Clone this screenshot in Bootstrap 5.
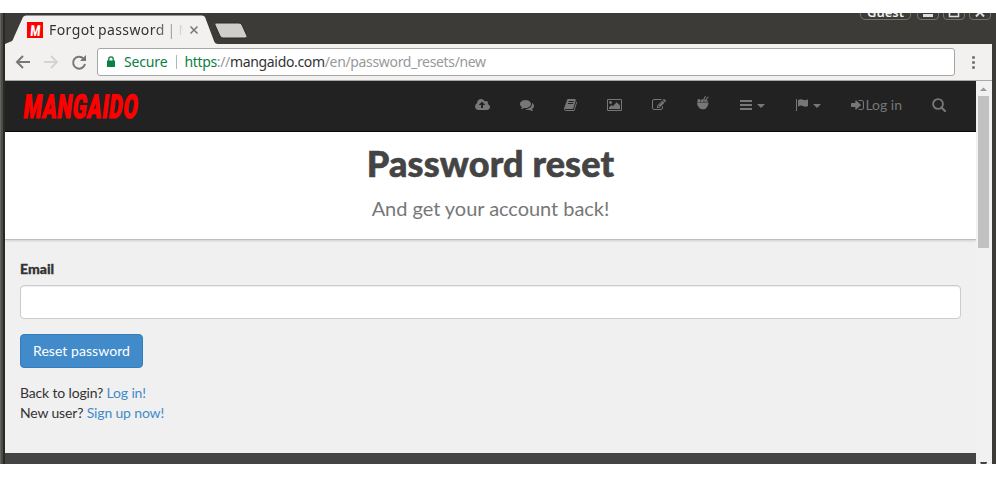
<!DOCTYPE html>
<html lang="en">
<head>
<meta charset="utf-8">
<title>Forgot password | Mangaido</title>
<link href="https://cdn.jsdelivr.net/npm/bootstrap@5.3.0/dist/css/bootstrap.min.css" rel="stylesheet">
<style>
body{background:#fff;padding-top:13px;height:477px;overflow:hidden;font:14px/20px Lato,sans-serif;color:#333}
.window{height:451px;background:#3c3b37;padding:0 4px 0 5px;border-left:0;box-shadow:inset 1px 0 #65645e,inset 3px 0 #4d4b46,inset 5px 0 #2b2925}
.ui{font-family:"Noto Sans","Open Sans",sans-serif}
.strip{height:31px;flex:none}
.strip svg.tabs{display:block}
.controls{position:absolute;right:1px;top:-11px;height:19px;overflow:hidden;gap:4px}
.pill{height:18px;width:22px;border:1px solid #77756e;border-radius:4px;color:#eee;font-size:13px;font-weight:600;line-height:18px;text-align:center}
.pill.guest{width:51px;border-radius:5px;margin-right:2px}
.clipper{position:absolute;right:0;top:0;width:150px;height:9px;overflow:hidden}
.tabtitle{position:absolute;left:44px;top:7px;width:134px;font-size:14px;letter-spacing:.42px;word-spacing:-1.2px;overflow:hidden;white-space:nowrap;-webkit-mask-image:linear-gradient(90deg,#000 105px,transparent 136px)}
.tools{height:37px;background:#f2f1f0;border-bottom:1px solid #a8a8a6;padding:0 11px 1px 10px;flex:none}
.address{height:28px;border:1px solid #a6a6a4;border-radius:3px;background:#fff;font-size:14px;padding-left:9px;white-space:nowrap}
.address .rule{width:1px;height:14px;background:#b5b5b5;margin:0 7px 0 9px}
.secure{margin-left:9px;letter-spacing:-.15px}
.url{letter-spacing:-.34px}
.green{color:#0b8043}.grey{color:#999}
.view{height:383px;flex:none}
.site{width:971px;background:#f0f0f0;overflow:hidden}
.sitebar{height:51px;background:#222;border-bottom:1px solid #080808;padding:0 30px 0 18px;color:#777;flex:none}
.sitebar .menu{gap:30px;padding-bottom:2px}
.sitebar svg{fill:#777;display:block}
.caret{border:4px solid transparent;border-top-color:#777;border-bottom:0;margin-left:5px;margin-top:2px}
.flags{margin-left:1px}
.signin{margin-left:1px}
.hero{height:108px;background:#fff;border-bottom:1px solid #bdbdbd;box-shadow:0 1px 2px #0002;text-align:center;padding-top:11px;flex:none}
.hero h1{font-size:36px;font-weight:900;line-height:40px;color:#444;margin:0 0 10px;letter-spacing:.15px;-webkit-text-stroke:.6px #444}
.hero p{font-size:20px;line-height:30px;color:#777;margin:0;letter-spacing:-.04px}
.main{padding:19px 15px 0;height:213px;flex:none}
.main label{font-weight:900;line-height:20px;margin-bottom:6px;letter-spacing:0;-webkit-text-stroke:.3px #333}
.main .form-control{height:34px;border-color:#ccc;border-radius:4px;box-shadow:inset 0 1px 1px rgba(0,0,0,.075);margin-bottom:15px}
.reset{height:34px;background:#428bca;border:1px solid #357ebd;color:#fff;font-size:14px;line-height:20px;padding:6px 12px;border-radius:4px;margin-bottom:15px;letter-spacing:.06px}
.hint{letter-spacing:-.16px}
.main a{color:#428bca;text-decoration:none}
.foot{background:#444}
.scroller{width:16px;background:#f1f1f1;padding:5px 2px 0}
.thumb{width:11px;height:152px;background:#c1c1c1}
</style>
<script src="https://cdn.jsdelivr.net/npm/bootstrap@5.3.0/dist/js/bootstrap.bundle.min.js"></script>
</head>
<body>
<div class="window d-flex flex-column overflow-hidden">
 <div class="strip ui position-relative">
  <svg class="tabs" width="300" height="31" viewBox="5 13 300 31">
   <path d="M5 44L12 41Q13 40 14 37L23 17Q24 15.500 26 15.500H202Q204 15.500 205 17L214 41Q215 44 218 44Z" fill="#f2f1f0"/>
   <path d="M216 23H239Q241 23 242 25L247 36Q248 38 245 38H223Q221 38 220 36L215 25Q214 23 216 23Z" fill="#cfcecc" stroke="#2e2d2a"/>
   <path d="M27 22h16v16H27z" fill="#f00"/>
   <path d="M190.500 26.500l7 7m0-7l-7 7" stroke="#777" stroke-width="1.500"/>
   <text transform="translate(30 35.500) skewX(-5)" font-family="Roboto,sans-serif" font-weight="900" font-size="15" fill="#fff" textLength="10" lengthAdjust="spacingAndGlyphs">M</text>
  </svg>
  <div class="tabtitle">Forgot password | Mangaido</div>
  <div class="clipper"><div class="controls d-flex">
   <div class="pill guest">Guest</div>
   <div class="pill"><svg class="d-block" width="20" height="18"><path d="M5 11h10v3H5z" fill="#ddd"/></svg></div>
   <div class="pill"><svg class="d-block" width="20" height="18"><path d="M5.500 5.500h9v8h-9z" fill="none" stroke="#ddd" stroke-width="1.600"/></svg></div>
   <div class="pill"><svg class="d-block" width="20" height="18"><path d="M6 5l8 8.500m0-8.500l-8 8.500" stroke="#ddd" stroke-width="2"/></svg></div>
  </div></div>
 </div>
 <div class="tools ui d-flex align-items-center">
  <svg width="82" height="28" viewBox="15 48 82 28" fill="none" stroke-width="2">
   <path d="M30 62H17M23 56l-6 6 6 6" stroke="#777"/>
   <path d="M44 62h13M51 56l6 6-6 6" stroke="#d5d4d3"/>
   <path d="M83.500 58.500A6 6 0 1 0 85 64" stroke="#777"/><path d="M86 55v6h-6z" fill="#777"/>
  </svg>
  <div class="address flex-fill d-flex align-items-center">
   <svg width="8" height="12" viewBox="0 0 8 12"><path d="M0 4.500h8V11H0z" fill="#0b8043"/><path d="M1.800 5V3a2.200 2.200 0 0 1 4.400 0v2" fill="none" stroke="#0b8043" stroke-width="1.300"/></svg>
   <span class="green secure">Secure</span><span class="rule"></span>
   <span class="url"><span class="green">https</span><span class="grey">://</span>mangaido.com<span class="grey">/en/password_resets/new</span></span>
  </div>
  <svg width="26" height="16" viewBox="0 0 26 16" fill="#666"><path d="M17.200 2.200h2.600v2.600h-2.600zM17.200 7.200h2.600v2.600h-2.600zM17.200 12.200h2.600v2.600h-2.600z"/></svg>
 </div>
 <div class="view d-flex">
  <div class="site d-flex flex-column">
   <nav class="sitebar d-flex align-items-center justify-content-between">
    <svg width="124" height="36" viewBox="0 0 124 36"><text transform="translate(-.5 29.500) skewX(-7) scale(.63 1)" font-family="Roboto,sans-serif" font-weight="900" font-size="33" fill="#f00" stroke="#f00" stroke-width="1" stroke-linejoin="round" textLength="181" lengthAdjust="spacing">MANGAIDO</text></svg>
    <div class="menu d-flex align-items-center">
     <svg width="15" height="14" viewBox="0 0 1920 1792"><path d="M1280 864q0-14-9-23l-352-352q-9-9-23-9t-23 9l-351 351q-10 12-10 24 0 14 9 23t23 9h224v352q0 13 9.500 22.500t22.500 9.500h192q13 0 22.500-9.500t9.500-22.500v-352h224q13 0 22.500-9.500t9.500-22.500zm640 288q0 159-112.500 271.500t-271.500 112.500h-1088q-185 0-316.500-131.500t-131.500-316.500q0-130 70-240t188-165q-2-30-2-43 0-212 150-362t362-150q156 0 285.500 87t188.500 231q71-62 166-62 106 0 181 75t75 181q0 76-41 138 130 31 213.500 135.500t83.500 238.500z"/></svg>
     <svg width="14" height="14" viewBox="0 0 1792 1792"><path d="M1408 768q0 139-94 257t-256.500 186.500-353.500 68.500q-86 0-176-16-124 88-278 128-36 9-86 16h-3q-11 0-20.500-8t-11.500-21q-1-3-1-6.500t.5-6.500 2-6l2.500-5 3.500-5.500 4-5 4.500-5 4-4.500q5-6 23-25t26-29.500 22.500-29 25-38.500 20.500-44q-124-72-195-177t-71-224q0-139 94-257t256.500-186.500 353.500-68.500 353.500 68.500 256.500 186.500 94 257zm384 256q0 120-71 224.500t-195 176.500q10 24 20.500 44t25 38.500 22.500 29 26 29.500 23 25q1 1 4 4.500t4.500 5 4 5 3.500 5.500l2.500 5 2 6 .5 6.500-1 6.500q-3 14-13 22t-22 7q-50-7-86-16-154-40-278-128-90 16-176 16-271 0-472-132 58 4 88 4 161 0 309-45t264-129q125-92 192-212t67-254q0-77-23-152 129 71 204 178t75 230z"/></svg>
     <svg width="13" height="14" viewBox="64 0 1664 1792"><path d="M1703 478q40 57 18 129l-275 906q-19 64-76.500 107.500t-122.500 43.500h-923q-77 0-148.500-53.500t-99.500-131.500q-24-67-2-127 0-4 3-27t4-37q1-8-3-21.500t-3-19.500q2-11 8-21t16.500-23.500 16.500-23.500q23-38 45-91.500t30-91.500q3-10 .5-30t-.5-28q3-11 17-28t17-23q21-36 42-92t25-90q1-9-2.500-32t.5-28q4-13 22-30.500t22-22.500q19-26 42.500-84.500t27.500-96.500q1-8-3-25.500t-2-26.500q2-8 9-18t18-23 17-21q8-12 16.500-30.500t15-35 16-36 19.500-32 26.500-23.500 36-11.500 47.500 5.500l-1 3q38-9 51-9h761q74 0 114 56t18 130l-274 906q-36 119-71.500 153.500t-128.500 34.500h-869q-27 0-38 15-11 16-1 43 24 70 144 70h923q29 0 56-15.500t35-41.500l300-987q7-22 5-57 38 15 59 43zm-1064 2q-4 13 2 22.500t20 9.500h608q13 0 25.500-9.500t16.500-22.500l21-64q4-13-2-22.500t-20-9.500h-608q-13 0-25.500 9.500t-16.500 22.500zm-83 256q-4 13 2 22.500t20 9.500h608q13 0 25.500-9.500t16.500-22.500l21-64q4-13-2-22.500t-20-9.500h-608q-13 0-25.500 9.500t-16.500 22.500z"/></svg>
     <svg width="15" height="14" viewBox="-64 0 1920 1792"><path d="M576 576q0 80-56 136t-136 56-136-56-56-136 56-136 136-56 136 56 56 136zm1024 384v448h-1408v-192l320-320 160 160 512-512zm96-704h-1600q-13 0-22.500 9.500t-9.500 22.500v1216q0 13 9.500 22.500t22.500 9.500h1600q13 0 22.500-9.500t9.500-22.500v-1216q0-13-9.500-22.500t-22.500-9.500zm160 32v1216q0 66-47 113t-113 47h-1600q-66 0-113-47t-47-113v-1216q0-66 47-113t113-47h1600q66 0 113 47t47 113z"/></svg>
     <svg width="14" height="14" viewBox="0 0 1792 1792"><path d="M888 1184l116-116-152-152-116 116v56h96v96h56zm440-720q-16-16-33 1l-350 350q-17 17-1 33t33-1l350-350q17-17 1-33zm80 594v190q0 119-84.500 203.500t-203.500 84.500h-832q-119 0-203.500-84.500t-84.500-203.500v-832q0-119 84.500-203.500t203.500-84.500h832q63 0 117 25 15 7 18 23 3 17-9 29l-49 49q-14 14-32 8-23-6-45-6h-832q-66 0-113 47t-47 113v832q0 66 47 113t113 47h832q66 0 113-47t47-113v-126q0-13 9-22l64-64q15-15 35-7t20 29zm-96-738l288 288-672 672h-288v-288zm444 132l-92 92-288-288 92-92q28-28 68-28t68 28l152 152q28 28 28 68t-28 68z"/></svg>
     <svg class="mb-1" width="14" height="16" viewBox="0 0 14 16"><path d="M1 7.500h11.500Q12.500 10 11 12l-1.500 1.700q-2.700 1-5.200 0L2.500 12Q1 10 1 7.500z"/><circle cx="3" cy="5.700" r="1.700"/><circle cx="6.300" cy="5.700" r="1.500"/><path d="M8 6.700l.3-2.200L11 5l1.200 1.700zM7 4.500L9.300.8l.8.500L8 5zM9.300 4.500L12 1.500l.7.700-2.400 2.900z"/></svg>
     <div class="d-flex align-items-center"><svg width="12" height="12"><path d="M0 1h12v2H0zM0 5h12v2H0zM0 9h12v2H0z"/></svg><span class="caret"></span></div>
     <div class="flags d-flex align-items-center"><svg width="12" height="14" viewBox="0 0 12 14"><path d="M0 1h1v12H0zM2 2.200Q4.500.600 7 1.700T12 1.300V8Q9.500 9.400 7 8.100T2 8.700z"/></svg><span class="caret"></span></div>
     <div class="d-flex align-items-center"><svg width="13" height="14" viewBox="128 0 1536 1792" preserveAspectRatio="none"><path d="M1312 896q0 26-19 45l-544 544q-19 19-45 19t-45-19-19-45v-288h-448q-26 0-45-19t-19-45v-384q0-26 19-45t45-19h448v-288q0-26 19-45t45-19 45 19l544 544q19 19 19 45zm352-352v704q0 119-84.500 203.500t-203.500 84.500h-320q-13 0-22.500-9.500t-9.500-22.500q0-4-1-20t-.5-26.500 3-23.500 10-19.500 20.500-6.500h320q66 0 113-47t47-113v-704q0-66-47-113t-113-47h-312l-11.500-1-11.500-3-8-5.500-7-9-2-13.500q0-4-1-20t-.5-26.500 3-23.500 10-19.500 20.500-6.500h320q119 0 203.500 84.500t84.500 203.500z"/></svg><span class="signin">Log in</span></div>
     <svg width="14" height="14" viewBox="0 0 14 14"><path d="M9.500 9.500l3.500 3.500" stroke="#777" stroke-width="2.200" stroke-linecap="round"/><circle cx="6" cy="6" r="4.900" fill="none" stroke="#777" stroke-width="1.900"/></svg>
    </div>
   </nav>
   <header class="hero"><h1>Password reset</h1><p>And get your account back!</p></header>
   <main class="main">
    <label for="email" class="d-block">Email</label>
    <input id="email" class="form-control" type="email">
    <button class="btn reset d-block">Reset password</button>
    <div class="hint">Back to login? <a href="#">Log in!</a></div>
    <div class="hint">New user? <a href="#">Sign up now!</a></div>
   </main>
   <footer class="foot flex-fill"></footer>
  </div>
  <div class="scroller d-flex flex-column justify-content-between">
   <div><svg class="d-block" width="11" height="10"><path d="M2 5l3.500-3.500L9 5z" fill="#999"/></svg><div class="thumb"></div></div>
   <svg class="d-block" width="12" height="2"><path d="M2 0h7v1l-1 1H3z" fill="#444"/></svg>
  </div>
 </div>
</div>
</body>
</html>
